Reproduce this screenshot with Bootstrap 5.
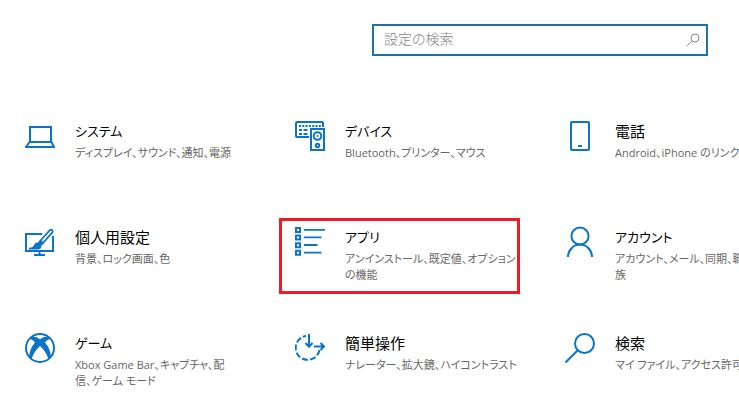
<!DOCTYPE html>
<html lang="ja">
<head>
<meta charset="utf-8">
<meta name="viewport" content="width=device-width, initial-scale=1">
<title>設定</title>
<link href="https://cdn.jsdelivr.net/npm/bootstrap@5.3.0/dist/css/bootstrap.min.css" rel="stylesheet">
<style>
  body {
    font-family: "Open Sans", "Noto Sans CJK JP", sans-serif;
    font-feature-settings: "palt";
    color: #000;
    background: #fff;
  }
  .search-bar { padding: 24px 31px 0 372px; }
  .search-box { border: 2px solid #1f6fab; height: 32px; }
  .search-box input {
    font-size: 14px;
    line-height: 20px;
    padding: 0 10px 2px;
    font-weight: 300;
    font-feature-settings: "palt";
    background: transparent;
    outline: 0;
  }
  .search-box input::placeholder { color: #858585; opacity: 1; }
  .search-box button { color: #8a8a8a; width: 26px; }
  .category-grid {
    display: grid;
    grid-template-columns: repeat(3, 241px);
    grid-auto-rows: minmax(76px, auto);
    gap: 30px 29px;
    padding: 56px 9px 10px;
  }
  .tile { border: 3px solid transparent; padding: 4px 0 0 13px; gap: 20px; color: #000; }
  .tile.picked { border-color: #ed1c24; }
  .tile svg { width: 30px; height: 34px; color: #0b74c9; }
  .tile-title { font-size: 15px; line-height: 24px; margin-bottom: 2px; }
  .tile-title.kana { font-size: 13px; }
  .tile-text { font-size: 11px; line-height: 16px; color: #666; }
</style>
</head>
<body class="overflow-hidden">
<header class="search-bar">
  <form class="search-box d-flex align-items-center" role="search">
    <label for="q" class="visually-hidden">設定の検索</label>
    <input id="q" type="text" class="flex-grow-1 border-0 w-100" placeholder="設定の検索">
    <button type="button" class="border-0 bg-transparent p-0 flex-shrink-0 d-flex align-items-center justify-content-center" aria-label="検索">
      <svg width="14" height="14" viewBox="0 0 14 14" fill="none" stroke="currentColor"><circle cx="9" cy="5" r="4"/><path d="M6.100 7.900 1 13"/></svg>
    </button>
  </form>
</header>
<main class="category-grid text-nowrap">
  <a href="#system" class="tile d-flex align-items-start text-decoration-none">
    <svg class="flex-shrink-0" viewBox="0 -2 30 34" fill="none" stroke="currentColor" stroke-width="2"><path d="M5 20V6h21v14M4.600 21h21.800l2.600 5H1z"/></svg>
    <div><div class="tile-title kana">システム</div><div class="tile-text">ディスプレイ、サウンド、通知、電源</div></div>
  </a>
  <a href="#devices" class="tile d-flex align-items-start text-decoration-none">
    <svg class="flex-shrink-0" viewBox="0 -2 30 34" fill="none" stroke="currentColor" stroke-width="2"><path d="M14 16H2q-1 0-1-1V2q0-1 1-1h25q1 0 1 1v4"/><path d="M4 5h22" stroke-dasharray="2 1.300"/><path d="M4 9h3m1.500 0h4M4 13h3m1.500 0h4"/><path d="M16 8h13v21H16z"/><circle cx="22.500" cy="15" r="3.800"/><circle cx="22.500" cy="15" r="1" fill="currentColor" stroke="none"/><circle cx="22.500" cy="24.500" r="1.800"/></svg>
    <div><div class="tile-title kana">デバイス</div><div class="tile-text">Bluetooth、プリンター、マウス</div></div>
  </a>
  <a href="#phone" class="tile d-flex align-items-start text-decoration-none">
    <svg class="flex-shrink-0" viewBox="0 -2 30 34" fill="none" stroke="currentColor" stroke-width="2"><rect x="6" y="1" width="18" height="28" rx="1"/><path d="M13 25h4"/></svg>
    <div><div class="tile-title">電話</div><div class="tile-text">Android、iPhone のリンク</div></div>
  </a>
  <a href="#personalization" class="tile d-flex align-items-start text-decoration-none">
    <svg class="flex-shrink-0" viewBox="0 -2 30 34" fill="none" stroke="currentColor" stroke-width="2"><path d="M17 7H1v17h27V9"/><path d="M14.500 24v4M9 28h11"/><path d="M15.500 13.500 24.800 3.200q1.300-1 2.400 0 1 1.300 0 2.400L18 16z" stroke-width="1.800"/><path d="M14.500 13.500 18.500 17l-2.200 1.700-3.500-3z" fill="currentColor" stroke="none"/><path d="M12 15.500q3.500 0 4.500 3.500-.5 3.500-4 3.500H4v-1.800q4.500-.2 5-2.700.8-2.500 3-2.500z" fill="currentColor" stroke="none"/></svg>
    <div><div class="tile-title">個人用設定</div><div class="tile-text">背景、ロック画面、色</div></div>
  </a>
  <a href="#apps" class="tile picked d-flex align-items-start text-decoration-none">
    <svg class="flex-shrink-0" viewBox="0 -2 30 34" fill="none" stroke="currentColor" stroke-width="2"><path d="M1 1h4v4H1zM1 8.600h4v4H1zM1 16.200h4v4H1zM1 23.800h4v4H1z"/><path d="M9 2.800h21M9 10.400h17.500M9 18h13.500M9 25.600h17.500" stroke-width="1.800"/></svg>
    <div><div class="tile-title kana">アプリ</div><div class="tile-text">アンインストール、既定値、オプション<br>の機能</div></div>
  </a>
  <a href="#accounts" class="tile d-flex align-items-start text-decoration-none">
    <svg class="flex-shrink-0" viewBox="0 -2 30 34" fill="none" stroke="currentColor" stroke-width="2"><circle cx="15" cy="9" r="8.600"/><path d="M3 30a12 12.400 0 0 1 24 0"/></svg>
    <div><div class="tile-title kana">アカウント</div><div class="tile-text">アカウント、メール、同期、職場、家<br>族</div></div>
  </a>
  <a href="#gaming" class="tile d-flex align-items-start text-decoration-none">
    <svg class="flex-shrink-0" viewBox="0 -2 30 34" fill="none" stroke="currentColor" stroke-width="2"><circle cx="15" cy="15" r="14"/><path d="M7 4Q11 3.300 15 6.200 19 3.300 23 4L25 6Q22 6.500 20 9.500 25.500 15.500 26 24.500L23.500 26Q21 18.500 15 13 9 18.500 6.500 26L4 24.500Q4.500 15.500 10 9.500 8 6.500 5 6z" fill="currentColor" stroke="none"/></svg>
    <div><div class="tile-title kana">ゲーム</div><div class="tile-text">Xbox Game Bar、キャプチャ、配<br>信、ゲーム モード</div></div>
  </a>
  <a href="#ease" class="tile d-flex align-items-start text-decoration-none">
    <svg class="flex-shrink-0" viewBox="0 -2 30 34" fill="none" stroke="currentColor" stroke-width="2"><path d="M24.500 17A12 12 0 1 1 11 3" stroke-dasharray="6 2.200"/><path d="M14 1v12M10.500 10l3.500 3.800 3.500-3.800M19 13.500h10M25.500 10l3.500 3.500-3.500 3.500"/></svg>
    <div><div class="tile-title">簡単操作</div><div class="tile-text">ナレーター、拡大鏡、ハイコントラスト</div></div>
  </a>
  <a href="#search" class="tile d-flex align-items-start text-decoration-none">
    <svg class="flex-shrink-0" viewBox="0 -2 30 34" fill="none" stroke="currentColor" stroke-width="2"><circle cx="19.500" cy="10.500" r="9.500"/><path d="M12.700 17.300.500 29.500"/></svg>
    <div><div class="tile-title">検索</div><div class="tile-text">マイ ファイル、アクセス許可</div></div>
  </a>
</main>
<script src="https://cdn.jsdelivr.net/npm/bootstrap@5.3.0/dist/js/bootstrap.bundle.min.js"></script>
</body>
</html>
